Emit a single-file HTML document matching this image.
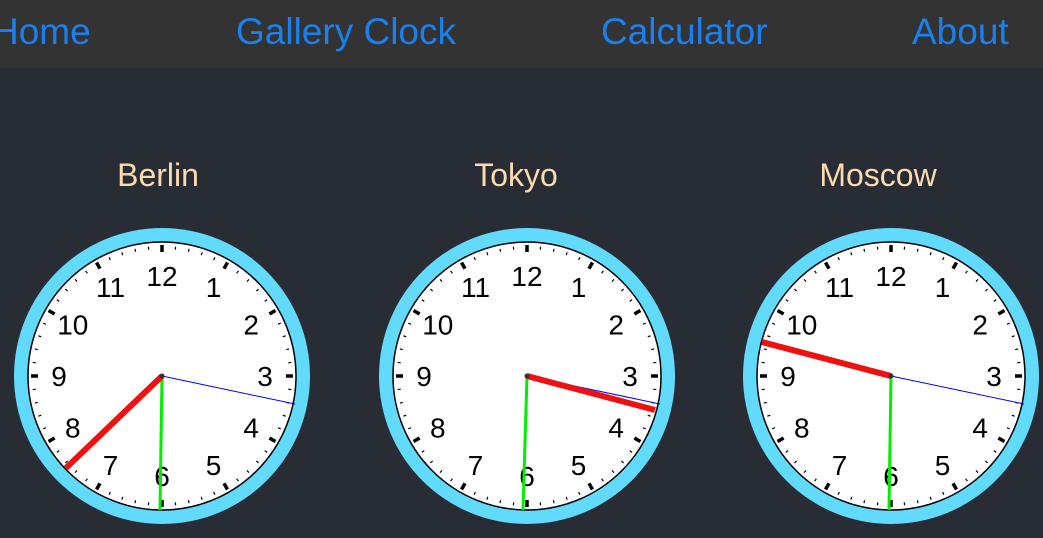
<!DOCTYPE html>
<html><head><meta charset="utf-8"><style>
html,body{margin:0;padding:0;width:1043px;height:538px;overflow:hidden;background:#282c34;font-family:"Liberation Sans",Arial,sans-serif}
.nav{position:absolute;left:0;top:0;width:1043px;height:68px;background:#333333}
.nav span{position:absolute;top:12px;font-size:37px;color:#1a80f0;white-space:nowrap;line-height:40px}
.t{position:absolute;top:155px;font-size:32px;color:#fadcaf;line-height:40px;transform:translateX(-50%)}
svg{position:absolute;left:0;top:0}
</style></head><body>
<div class="nav"><span style="left:-8px">Home</span><span style="left:236px">Gallery Clock</span><span style="left:601px">Calculator</span><span style="left:912px">About</span></div>
<div class="t" style="left:158px">Berlin</div>
<div class="t" style="left:516px">Tokyo</div>
<div class="t" style="left:878px">Moscow</div>
<svg id="s" width="1043" height="538" xmlns="http://www.w3.org/2000/svg"></svg>
<script>
var clocks=[[162,376,[66,468],[160,510]],[527,376,[655,410],[523,510]],[891,376,[762,342],[889,510]]];
var h='';
clocks.forEach(function(c){var x=c[0],y=c[1];
h+='<circle cx="'+x+'" cy="'+y+'" r="148" fill="#61dafb"/><circle cx="'+x+'" cy="'+y+'" r="134" fill="#fff" stroke="#000" stroke-width="1.5"/>';
for(var i=0;i<60;i++){var a=i*Math.PI/30,s=Math.sin(a),co=-Math.cos(a),maj=i%5==0;var r1=maj?124:127,r2=maj?131:130;
h+='<line x1="'+(x+s*r1)+'" y1="'+(y+co*r1)+'" x2="'+(x+s*r2)+'" y2="'+(y+co*r2)+'" stroke="#000" stroke-width="'+(maj?3.5:1.2)+'"/>';}
for(var n=1;n<=12;n++){var a=n*Math.PI/6,r=n==12||n==6?100:103;
h+='<text x="'+(x+Math.sin(a)*r)+'" y="'+(y-Math.cos(a)*r+10)+'" font-size="28" font-family="Liberation Sans,sans-serif" text-anchor="middle" fill="#000">'+n+'</text>';}
h+='<line x1="'+x+'" y1="'+y+'" x2="'+(x+133)+'" y2="'+(y+28)+'" stroke="#0000ff" stroke-width="1"/>';
h+='<line x1="'+x+'" y1="'+y+'" x2="'+c[3][0]+'" y2="'+c[3][1]+'" stroke="#00ee00" stroke-width="3"/>';
h+='<line x1="'+x+'" y1="'+y+'" x2="'+c[2][0]+'" y2="'+c[2][1]+'" stroke="#ee1111" stroke-width="6"/>';
h+='<circle cx="'+x+'" cy="'+y+'" r="2.5" fill="#333"/>';});
document.getElementById('s').innerHTML=h;
</script>
</body></html>
